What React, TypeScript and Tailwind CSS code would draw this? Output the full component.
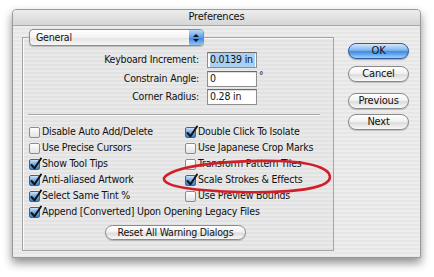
import React from "react";

const leftChecks = [
  { label: "Disable Auto Add/Delete", checked: false },
  { label: "Use Precise Cursors", checked: false },
  { label: "Show Tool Tips", checked: true },
  { label: "Anti-aliased Artwork", checked: true },
  { label: "Select Same Tint %", checked: true },
];

const rightChecks = [
  { label: "Double Click To Isolate", checked: true },
  { label: "Use Japanese Crop Marks", checked: false },
  { label: "Transform Pattern Tiles", checked: false },
  { label: "Scale Strokes & Effects", checked: true },
  { label: "Use Preview Bounds", checked: false },
];

function CheckBox({ checked }: { checked?: boolean }) {
  return (
    <span
      className={`relative inline-block h-[11px] w-[11px] shrink-0 rounded-[2px] border ${
        checked
          ? "border-[#3e648f] bg-[linear-gradient(#cfe3f8,#6ea6e0_50%,#3b7fd0)]"
          : "border-[#8c8c8c] bg-[linear-gradient(#ffffff,#e2e2e2)]"
      }`}
    >
      {checked && (
        <svg className="absolute left-[0px] top-[-3px] h-[13px] w-[12px]" viewBox="0 0 12 13" fill="none">
          <path d="M1.5 8 L4.5 11.2 L11 1.5" stroke="#111" strokeWidth="2" strokeLinecap="round" strokeLinejoin="round" />
        </svg>
      )}
    </span>
  );
}

function CheckRow({ label, checked }: { label: string; checked?: boolean }) {
  return (
    <div className="flex h-[16px] items-center gap-[2px]">
      <CheckBox checked={checked} />
      <span className="whitespace-nowrap">{label}</span>
    </div>
  );
}

function AquaButton({ label, primary }: { label: string; primary?: boolean }) {
  return (
    <div
      className={`flex h-[16px] w-[61px] items-center justify-center rounded-full border text-[11px] ${
        primary
          ? "border-[#2d5b9b] bg-[linear-gradient(#d5e7fb,#7fb4ee_45%,#3f8ae0_55%,#9cd0ff)] shadow-[0_1px_1px_rgba(0,0,0,0.3)]"
          : "border-[#8a8a8a] bg-[linear-gradient(#ffffff,#f2f2f2_45%,#dcdcdc_55%,#f8f8f8)] shadow-[0_1px_1px_rgba(0,0,0,0.2)]"
      }`}
    >
      {label}
    </div>
  );
}

function Field({ label, value, selected, suffix }: { label: string; value: string; selected?: boolean; suffix?: string }) {
  return (
    <div className="flex h-[16px] items-center">
      <span className="w-[184px] whitespace-nowrap pr-[8px] text-right">{label}</span>
      <div className="flex h-[16px] w-[50px] items-center overflow-hidden whitespace-nowrap border border-[#8e8e8e] border-t-[#6a6a6a] bg-white pl-[2px] shadow-[inset_0_1px_1px_rgba(0,0,0,0.15)]">
        <span className={selected ? "bg-[#a9d0f3] pr-[2px]" : ""}>{value}</span>
      </div>
      {suffix && <span className="ml-[2px] self-start text-[10px] leading-[10px]">{suffix}</span>}
    </div>
  );
}

export default function App() {
  return (
    <div className="relative h-[277px] w-[434px] overflow-hidden bg-white pl-[12px] pt-[9px] font-['DejaVu_Sans_Condensed','DejaVu_Sans',sans-serif] text-[10.5px] tracking-[-0.2px] text-[#111]">
      <div className="flex h-[249px] w-[409px] flex-col rounded-t-[4px] border border-[#9a9a9a] shadow-[0_5px_10px_rgba(0,0,0,0.45)]">
        <div className="flex h-[16px] shrink-0 items-center justify-center rounded-t-[4px] border-b border-[#a9a9a9] bg-[linear-gradient(#ececec,#d6d6d6)] text-[11px]">
          Preferences
        </div>
        <div className="flex flex-1 bg-[repeating-linear-gradient(180deg,#ededed_0px,#ededed_2px,#e6e6e6_2px,#e6e6e6_4px)] pl-[9px] pt-[3px]">
          <div className="flex w-[312px] flex-col">
            <div className="relative z-10 ml-[7px] flex h-[17px] w-[175px] items-center rounded-[4px] border border-[#8d8d8d] bg-[linear-gradient(#ffffff,#f3f3f3_50%,#e3e3e3_52%,#f6f6f6)] pl-[6px] shadow-[0_1px_1px_rgba(0,0,0,0.2)]">
              <span className="flex-1">General</span>
              <div className="flex h-[15px] w-[14px] flex-col items-center justify-center gap-[2px] rounded-r-[3px] bg-[linear-gradient(#b8d7f7,#5b9de6_50%,#3d84da_52%,#8fc3f7)]">
                <svg width="6" height="3" viewBox="0 0 6 3"><path d="M0 3 L3 0 L6 3 Z" fill="#111" /></svg>
                <svg width="6" height="3" viewBox="0 0 6 3"><path d="M0 0 L3 3 L6 0 Z" fill="#111" /></svg>
              </div>
            </div>
            <div className="-mt-[9px] flex h-[214px] flex-col border border-[#a4a4a4] bg-[repeating-linear-gradient(180deg,#e9e9e9_0px,#e9e9e9_2px,#e2e2e2_2px,#e2e2e2_4px)] shadow-[inset_1px_1px_0_#fafafa]">
              <div className="mt-[14px] flex flex-col gap-[2.5px]">
                <Field label="Keyboard Increment:" value="0.0139 in" selected />
                <Field label="Constrain Angle:" value="0" suffix="°" />
                <Field label="Corner Radius:" value="0.28 in" />
              </div>
              <div className="ml-[5px] mt-[9px] h-[2px] w-[292px] border-t border-[#a8a8a8] border-b-[#fafafa] border-b" />
              <div className="ml-[6px] mt-[8px] flex">
                <div className="flex w-[156px] flex-col">
                  {leftChecks.map((c) => (
                    <CheckRow key={c.label} label={c.label} checked={c.checked} />
                  ))}
                </div>
                <div className="flex flex-col">
                  {rightChecks.map((c) => (
                    <CheckRow key={c.label} label={c.label} checked={c.checked} />
                  ))}
                </div>
              </div>
              <div className="ml-[6px]">
                <CheckRow label="Append [Converted] Upon Opening Legacy Files" checked />
              </div>
              <div className="ml-[82px] mt-[5px] flex h-[15px] w-[141px] items-center justify-center rounded-full border border-[#8a8a8a] bg-[linear-gradient(#ffffff,#f2f2f2_45%,#dcdcdc_55%,#f8f8f8)] shadow-[0_1px_1px_rgba(0,0,0,0.2)]">
                Reset All Warning Dialogs
              </div>
            </div>
          </div>
          <div className="ml-[14px] flex flex-col pt-[14px]">
            <AquaButton label="OK" primary />
            <div className="mt-[7px]">
              <AquaButton label="Cancel" />
            </div>
            <div className="mt-[11px]">
              <AquaButton label="Previous" />
            </div>
            <div className="mt-[5px]">
              <AquaButton label="Next" />
            </div>
          </div>
        </div>
      </div>
      <svg className="pointer-events-none absolute left-0 top-0" width="434" height="277" viewBox="0 0 434 277" fill="none">
        <path
          d="M164 178 C 172 166, 225 160, 278 161 C 318 162, 334 171, 329 180 C 323 190, 282 193, 240 192 C 198 191, 162 187, 164 178 Z"
          stroke="#d11f2a"
          strokeWidth="2.6"
        />
      </svg>
    </div>
  );
}
